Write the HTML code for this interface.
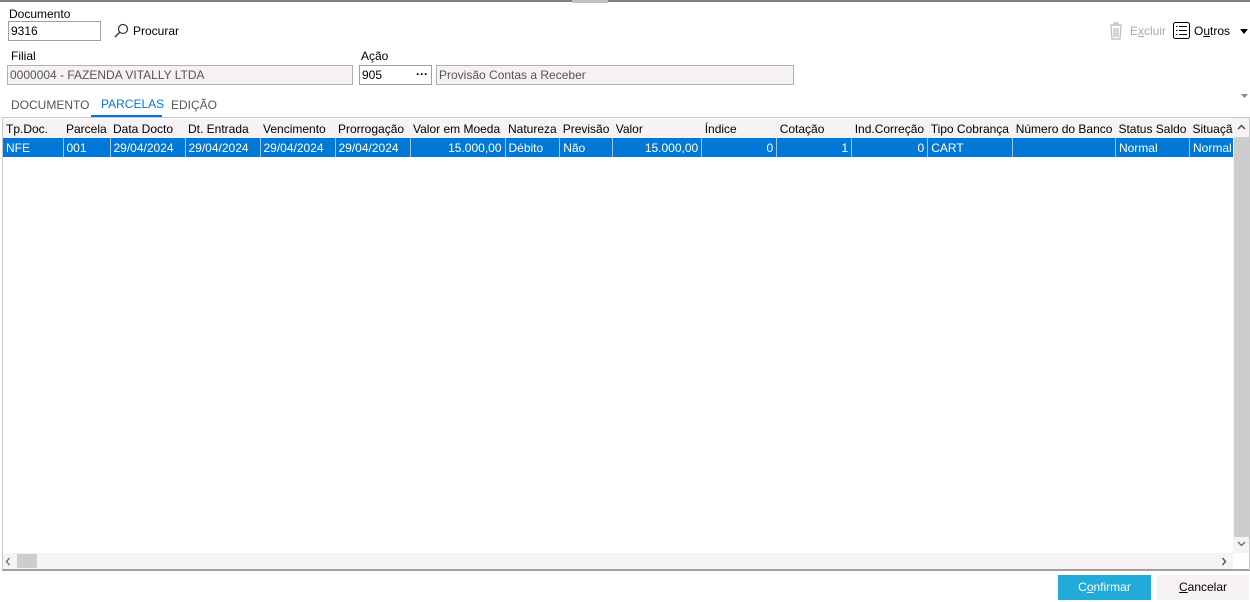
<!DOCTYPE html>
<html><head><meta charset="utf-8"><style>
*{box-sizing:border-box;margin:0;padding:0}
body{width:1250px;height:602px;background:#fff;font-family:"Liberation Sans","DejaVu Sans",sans-serif;font-size:12px;color:#000;position:relative;overflow:hidden}
.a{position:absolute;white-space:nowrap}
.inp{position:absolute;border:1px solid #a0a0a0;height:20px;padding:2px 2px;line-height:14px}
.dis{background:#f5f1f4;color:#555;border-color:#b0b0b0}
table{border-collapse:collapse;table-layout:fixed;position:absolute;left:3px;top:119px}
td{height:19px;padding:0 3px;overflow:hidden;white-space:nowrap;line-height:18px}
tr.h td{background:#f6f2f5;color:#000}
tr.s td{background:#0078d7;color:#fff;border-left:1px solid #9cc8ee}
tr.s td:first-child{border-left:none}
.r{text-align:right}
</style></head><body>
<div class="a" style="left:0;top:0;width:1250px;height:3px;border-top:2px solid #808080"></div>
<div class="a" style="left:572px;top:0;width:36px;height:3px;background:#c0c0c0"></div>
<div class="a" style="left:9px;top:7px">Documento</div>
<div class="inp" style="left:8px;top:21px;width:93px">9316</div>
<svg class="a" style="left:113px;top:23px" width="16" height="16" viewBox="0 0 16 16"><circle cx="10" cy="6" r="4.5" fill="none" stroke="#333" stroke-width="1.2"/><path d="M7 9L2 14" stroke="#333" stroke-width="1.4"/></svg>
<div class="a" style="left:133px;top:24px">Procurar</div>
<svg class="a" style="left:1108px;top:22px" width="16" height="18" viewBox="0 0 16 18"><path d="M2 3h12M6 3V1h4v2M3 4l1 13h8l1-13M6 6v9M8 6v9M10 6v9" fill="none" stroke="#bbb" stroke-width="1.2"/></svg>
<div class="a" style="left:1130px;top:24px;color:#aaa">E<u>x</u>cluir</div>
<svg class="a" style="left:1173px;top:22px" width="17" height="17" viewBox="0 0 17 17"><rect x="0.5" y="0.5" width="16" height="16" rx="2" fill="none" stroke="#000"/><path d="M3 4.5h1.5M6 4.5h8M3 8.5h1.5M6 8.5h8M3 12.5h1.5M6 12.5h8" stroke="#000"/></svg>
<div class="a" style="left:1194px;top:24px">O<u>u</u>tros</div>
<svg class="a" style="left:1240px;top:29px" width="8" height="5"><path d="M0 0h8L4 5z" fill="#000"/></svg>
<div class="a" style="left:11px;top:49px">Filial</div>
<div class="inp dis" style="left:7px;top:65px;width:346px">0000004 - FAZENDA VITALLY LTDA</div>
<div class="a" style="left:361px;top:49px">Ação</div>
<div class="inp" style="left:359px;top:65px;width:73px">905</div>
<div class="a" style="left:416px;top:67px;font-weight:bold">···</div>
<div class="inp dis" style="left:436px;top:65px;width:358px">Provisão Contas a Receber</div>
<div class="a" style="left:11px;top:98px;color:#555">DOCUMENTO</div>
<div class="a" style="left:101px;top:97px;color:#0078d7">PARCELAS</div>
<div class="a" style="left:91px;top:115px;width:71px;height:2px;background:#0078d7"></div>
<div class="a" style="left:171px;top:98px;color:#555">EDIÇÃO</div>
<svg class="a" style="left:1241px;top:94px" width="7" height="4"><path d="M0 0h7L3.5 4z" fill="#888"/></svg>
<div class="a" style="left:2px;top:117px;width:1248px;height:454px;border:1px solid #c8c8c8;border-bottom:2px solid #a0a0a0"></div>
<table>
<colgroup><col style="width:60px"><col style="width:47px"><col style="width:75px"><col style="width:75px"><col style="width:75px"><col style="width:75px"><col style="width:95px"><col style="width:54px"><col style="width:53px"><col style="width:89px"><col style="width:75px"><col style="width:75px"><col style="width:76px"><col style="width:85px"><col style="width:102px"><col style="width:73px"><col style="width:46px"></colgroup>
<tr class="h"><td>Tp.Doc.</td><td>Parcela</td><td>Data Docto</td><td>Dt. Entrada</td><td>Vencimento</td><td>Prorrogação</td><td>Valor em Moeda</td><td>Natureza</td><td>Previsão</td><td>Valor</td><td>Índice</td><td>Cotação</td><td>Ind.Correção</td><td>Tipo Cobrança</td><td>Número do Banco</td><td>Status Saldo</td><td>Situação</td></tr>
<tr class="s"><td>NFE</td><td>001</td><td>29/04/2024</td><td>29/04/2024</td><td>29/04/2024</td><td>29/04/2024</td><td class="r">15.000,00</td><td>Débito</td><td>Não</td><td class="r">15.000,00</td><td class="r">0</td><td class="r">1</td><td class="r">0</td><td>CART</td><td></td><td>Normal</td><td>Normal</td></tr>
</table>
<div class="a" style="left:1233px;top:118px;width:16px;height:435px;background:#f6f2f5"></div>
<div class="a" style="left:1234px;top:137px;width:15px;height:400px;background:#cdcdcd"></div>
<svg class="a" style="left:1237px;top:124px" width="9" height="6"><path d="M1 5L4.5 1.5L8 5" fill="none" stroke="#444" stroke-width="1.4"/></svg>
<svg class="a" style="left:1237px;top:541px" width="9" height="6"><path d="M1 1L4.5 4.5L8 1" fill="none" stroke="#666" stroke-width="1.3"/></svg>
<div class="a" style="left:3px;top:553px;width:1230px;height:16px;background:#f6f2f5"></div>
<div class="a" style="left:17px;top:554px;width:20px;height:14px;background:#cdcdcd"></div>
<svg class="a" style="left:5px;top:557px" width="6" height="9"><path d="M4.5 1L1.5 4.5L4.5 8" fill="none" stroke="#666" stroke-width="1.3"/></svg>
<svg class="a" style="left:1221px;top:557px" width="6" height="9"><path d="M1.5 1L4.5 4.5L1.5 8" fill="none" stroke="#555" stroke-width="1.4"/></svg>
<div class="a" style="left:1058px;top:575px;width:93px;height:25px;background:#22aad8;color:#fff;text-align:center;line-height:25px">C<u>o</u>nfirmar</div>
<div class="a" style="left:1157px;top:575px;width:92px;height:25px;background:#f6f2f5;text-align:center;line-height:25px"><u>C</u>ancelar</div>
</body></html>
